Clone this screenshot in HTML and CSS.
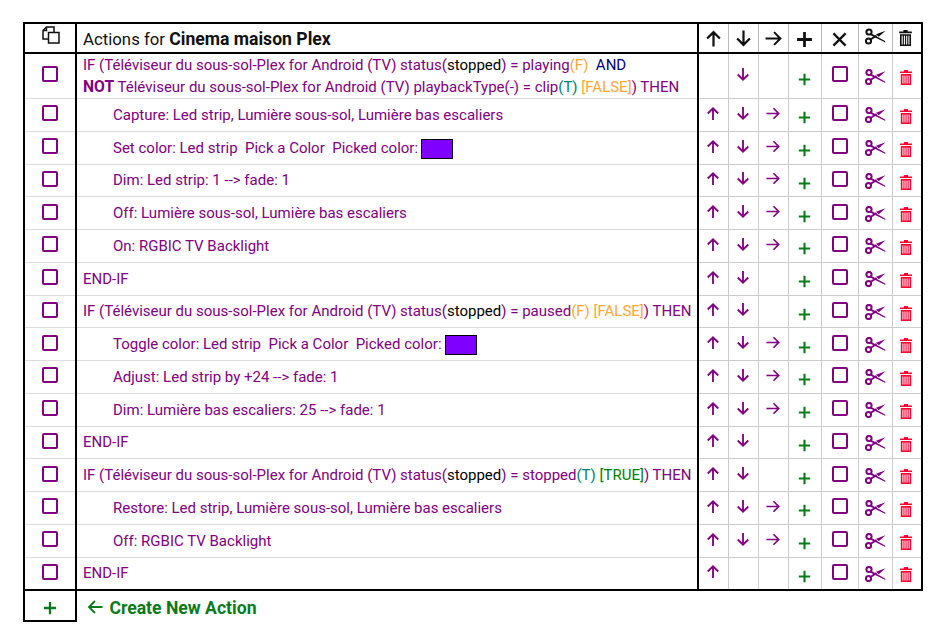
FILE: index.html
```html
<!DOCTYPE html>
<html lang="fr">
<head>
<meta charset="utf-8">
<title>Actions for Cinema maison Plex</title>
<link rel="stylesheet" href="styles.css">
</head>
<body>
<svg class="defs" width="0" height="0" aria-hidden="true">
<symbol id="up" viewBox="0 0 16 16"><path d="M8 15.500V2M2 8l6-6 6 6" fill="none" stroke="currentColor" stroke-width="2.100"/></symbol>
<symbol id="down" viewBox="0 0 16 16"><path d="M8 .5V14M2 8l6 6 6-6" fill="none" stroke="currentColor" stroke-width="2.100"/></symbol>
<symbol id="right" viewBox="0 0 16 16"><path d="M.5 8H14.500M8.500 2L14.500 8l-6 6" fill="none" stroke="currentColor" stroke-width="1.900"/></symbol>
<symbol id="plus" viewBox="0 0 16 16"><path d="M8 1v14M1 8h14" fill="none" stroke="currentColor" stroke-width="2.600"/></symbol>
<symbol id="x" viewBox="0 0 16 16"><path d="M1.500 1.500l13 13M14.500 1.500l-13 13" fill="none" stroke="currentColor" stroke-width="2.400"/></symbol>
<symbol id="box" viewBox="0 0 16 16"><rect x="1" y="1" width="14" height="14" rx="1" fill="none" stroke="currentColor" stroke-width="2"/></symbol>
<symbol id="cut" viewBox="0 0 21 16"><g fill="none" stroke="currentColor" stroke-width="2"><circle cx="4" cy="3.500" r="2.600"/><circle cx="3.500" cy="12.500" r="2.600"/><path d="M5.500 11L11.500 7"/></g><path d="M5.500 4.500L20 12.500l.5 1.500L5 6.500z" fill="currentColor"/><path d="M11 5.800L20.500 2.300 13.800 8.200z" fill="currentColor"/></symbol>
<symbol id="trash" viewBox="0 0 12 15"><path d="M4 0h4v1.500h4V3H0V1.500h4zM.8 4h10.400v11H.8zM2.400 5.500v8h1v-8zM4.500 5.500v8h1v-8zM6.600 5.500v8h1v-8zM8.700 5.500v8h1v-8z" fill="currentColor" fill-rule="evenodd"/></symbol>
<symbol id="copy" viewBox="0 0 18 18"><g fill="none" stroke="currentColor" stroke-width="1.500"><path d="M6.500 13H1V4.500L4.500 1H12V6"/><path d="M4.500 1V4.500H1"/><path d="M6.500 6.500H17V17H6.500z"/></g></symbol>
</svg>
<table class="grid">
<colgroup><col class="c-sel"><col class="c-text"><col class="c-a"><col class="c-a"><col class="c-a"><col class="c-p"><col class="c-x"><col class="c-s"><col class="c-t"></colgroup>
<thead>
<tr>
<th class="sel"><svg class="i-copy"><use href="#copy"/></svg></th>
<th class="title"><span class="title-text">Actions for <b>Cinema maison Plex</b></span></th>
<th><svg class="i-h"><use href="#up"/></svg></th>
<th><svg class="i-h"><use href="#down"/></svg></th>
<th><svg class="i-h"><use href="#right"/></svg></th>
<th><svg class="i-hp"><use href="#plus"/></svg></th>
<th><svg class="i-hx"><use href="#x"/></svg></th>
<th><svg class="i-hs"><use href="#cut"/></svg></th>
<th><svg class="i-ht"><use href="#trash"/></svg></th>
</tr>
</thead>
<tbody>
<tr class="tall">
<td class="sel"><svg class="i-box"><use href="#box"/></svg></td>
<td class="text">IF (Téléviseur du sous-sol-Plex for Android (TV) status(<span class="k">stopped</span>) = playing<span class="o">(F)</span> &nbsp;<span class="n">AND</span><br><b>NOT</b> Téléviseur du sous-sol-Plex for Android (TV) playbackType(-) = clip<span class="t">(T)</span> <span class="o">[FALSE]</span>) THEN</td>
<td></td>
<td><svg class="i-a"><use href="#down"/></svg></td>
<td></td>
<td><svg class="i-p"><use href="#plus"/></svg></td>
<td><svg class="i-x"><use href="#box"/></svg></td>
<td><svg class="i-s"><use href="#cut"/></svg></td>
<td><svg class="i-d"><use href="#trash"/></svg></td>
</tr>
<tr>
<td class="sel"><svg class="i-box"><use href="#box"/></svg></td>
<td class="text in">Capture: Led strip, Lumière sous-sol, Lumière bas escaliers</td>
<td><svg class="i-a"><use href="#up"/></svg></td><td><svg class="i-a"><use href="#down"/></svg></td><td><svg class="i-a"><use href="#right"/></svg></td>
<td><svg class="i-p"><use href="#plus"/></svg></td><td><svg class="i-x"><use href="#box"/></svg></td><td><svg class="i-s"><use href="#cut"/></svg></td><td><svg class="i-d"><use href="#trash"/></svg></td>
</tr>
<tr>
<td class="sel"><svg class="i-box"><use href="#box"/></svg></td>
<td class="text in">Set color: Led strip &nbsp;Pick a Color &nbsp;Picked color: <span class="swatch"></span></td>
<td><svg class="i-a"><use href="#up"/></svg></td><td><svg class="i-a"><use href="#down"/></svg></td><td><svg class="i-a"><use href="#right"/></svg></td>
<td><svg class="i-p"><use href="#plus"/></svg></td><td><svg class="i-x"><use href="#box"/></svg></td><td><svg class="i-s"><use href="#cut"/></svg></td><td><svg class="i-d"><use href="#trash"/></svg></td>
</tr>
<tr>
<td class="sel"><svg class="i-box"><use href="#box"/></svg></td>
<td class="text in">Dim: Led strip: 1 --&gt; fade: 1</td>
<td><svg class="i-a"><use href="#up"/></svg></td><td><svg class="i-a"><use href="#down"/></svg></td><td><svg class="i-a"><use href="#right"/></svg></td>
<td><svg class="i-p"><use href="#plus"/></svg></td><td><svg class="i-x"><use href="#box"/></svg></td><td><svg class="i-s"><use href="#cut"/></svg></td><td><svg class="i-d"><use href="#trash"/></svg></td>
</tr>
<tr>
<td class="sel"><svg class="i-box"><use href="#box"/></svg></td>
<td class="text in">Off: Lumière sous-sol, Lumière bas escaliers</td>
<td><svg class="i-a"><use href="#up"/></svg></td><td><svg class="i-a"><use href="#down"/></svg></td><td><svg class="i-a"><use href="#right"/></svg></td>
<td><svg class="i-p"><use href="#plus"/></svg></td><td><svg class="i-x"><use href="#box"/></svg></td><td><svg class="i-s"><use href="#cut"/></svg></td><td><svg class="i-d"><use href="#trash"/></svg></td>
</tr>
<tr>
<td class="sel"><svg class="i-box"><use href="#box"/></svg></td>
<td class="text in">On: RGBIC TV Backlight</td>
<td><svg class="i-a"><use href="#up"/></svg></td><td><svg class="i-a"><use href="#down"/></svg></td><td><svg class="i-a"><use href="#right"/></svg></td>
<td><svg class="i-p"><use href="#plus"/></svg></td><td><svg class="i-x"><use href="#box"/></svg></td><td><svg class="i-s"><use href="#cut"/></svg></td><td><svg class="i-d"><use href="#trash"/></svg></td>
</tr>
<tr>
<td class="sel"><svg class="i-box"><use href="#box"/></svg></td>
<td class="text">END-IF</td>
<td><svg class="i-a"><use href="#up"/></svg></td><td><svg class="i-a"><use href="#down"/></svg></td><td></td>
<td><svg class="i-p"><use href="#plus"/></svg></td><td><svg class="i-x"><use href="#box"/></svg></td><td><svg class="i-s"><use href="#cut"/></svg></td><td><svg class="i-d"><use href="#trash"/></svg></td>
</tr>
<tr>
<td class="sel"><svg class="i-box"><use href="#box"/></svg></td>
<td class="text">IF (Téléviseur du sous-sol-Plex for Android (TV) status(<span class="k">stopped</span>) = paused<span class="o">(F) [FALSE]</span>) THEN</td>
<td><svg class="i-a"><use href="#up"/></svg></td><td><svg class="i-a"><use href="#down"/></svg></td><td></td>
<td><svg class="i-p"><use href="#plus"/></svg></td><td><svg class="i-x"><use href="#box"/></svg></td><td><svg class="i-s"><use href="#cut"/></svg></td><td><svg class="i-d"><use href="#trash"/></svg></td>
</tr>
<tr>
<td class="sel"><svg class="i-box"><use href="#box"/></svg></td>
<td class="text in">Toggle color: Led strip &nbsp;Pick a Color &nbsp;Picked color: <span class="swatch"></span></td>
<td><svg class="i-a"><use href="#up"/></svg></td><td><svg class="i-a"><use href="#down"/></svg></td><td><svg class="i-a"><use href="#right"/></svg></td>
<td><svg class="i-p"><use href="#plus"/></svg></td><td><svg class="i-x"><use href="#box"/></svg></td><td><svg class="i-s"><use href="#cut"/></svg></td><td><svg class="i-d"><use href="#trash"/></svg></td>
</tr>
<tr>
<td class="sel"><svg class="i-box"><use href="#box"/></svg></td>
<td class="text in">Adjust: Led strip by +24 --&gt; fade: 1</td>
<td><svg class="i-a"><use href="#up"/></svg></td><td><svg class="i-a"><use href="#down"/></svg></td><td><svg class="i-a"><use href="#right"/></svg></td>
<td><svg class="i-p"><use href="#plus"/></svg></td><td><svg class="i-x"><use href="#box"/></svg></td><td><svg class="i-s"><use href="#cut"/></svg></td><td><svg class="i-d"><use href="#trash"/></svg></td>
</tr>
<tr>
<td class="sel"><svg class="i-box"><use href="#box"/></svg></td>
<td class="text in">Dim: Lumière bas escaliers: 25 --&gt; fade: 1</td>
<td><svg class="i-a"><use href="#up"/></svg></td><td><svg class="i-a"><use href="#down"/></svg></td><td><svg class="i-a"><use href="#right"/></svg></td>
<td><svg class="i-p"><use href="#plus"/></svg></td><td><svg class="i-x"><use href="#box"/></svg></td><td><svg class="i-s"><use href="#cut"/></svg></td><td><svg class="i-d"><use href="#trash"/></svg></td>
</tr>
<tr>
<td class="sel"><svg class="i-box"><use href="#box"/></svg></td>
<td class="text">END-IF</td>
<td><svg class="i-a"><use href="#up"/></svg></td><td><svg class="i-a"><use href="#down"/></svg></td><td></td>
<td><svg class="i-p"><use href="#plus"/></svg></td><td><svg class="i-x"><use href="#box"/></svg></td><td><svg class="i-s"><use href="#cut"/></svg></td><td><svg class="i-d"><use href="#trash"/></svg></td>
</tr>
<tr>
<td class="sel"><svg class="i-box"><use href="#box"/></svg></td>
<td class="text">IF (Téléviseur du sous-sol-Plex for Android (TV) status(<span class="k">stopped</span>) = stopped<span class="t">(T)</span> <span class="g">[TRUE]</span>) THEN</td>
<td><svg class="i-a"><use href="#up"/></svg></td><td><svg class="i-a"><use href="#down"/></svg></td><td></td>
<td><svg class="i-p"><use href="#plus"/></svg></td><td><svg class="i-x"><use href="#box"/></svg></td><td><svg class="i-s"><use href="#cut"/></svg></td><td><svg class="i-d"><use href="#trash"/></svg></td>
</tr>
<tr>
<td class="sel"><svg class="i-box"><use href="#box"/></svg></td>
<td class="text in">Restore: Led strip, Lumière sous-sol, Lumière bas escaliers</td>
<td><svg class="i-a"><use href="#up"/></svg></td><td><svg class="i-a"><use href="#down"/></svg></td><td><svg class="i-a"><use href="#right"/></svg></td>
<td><svg class="i-p"><use href="#plus"/></svg></td><td><svg class="i-x"><use href="#box"/></svg></td><td><svg class="i-s"><use href="#cut"/></svg></td><td><svg class="i-d"><use href="#trash"/></svg></td>
</tr>
<tr>
<td class="sel"><svg class="i-box"><use href="#box"/></svg></td>
<td class="text in">Off: RGBIC TV Backlight</td>
<td><svg class="i-a"><use href="#up"/></svg></td><td><svg class="i-a"><use href="#down"/></svg></td><td><svg class="i-a"><use href="#right"/></svg></td>
<td><svg class="i-p"><use href="#plus"/></svg></td><td><svg class="i-x"><use href="#box"/></svg></td><td><svg class="i-s"><use href="#cut"/></svg></td><td><svg class="i-d"><use href="#trash"/></svg></td>
</tr>
<tr class="last">
<td class="sel"><svg class="i-box"><use href="#box"/></svg></td>
<td class="text">END-IF</td>
<td><svg class="i-a"><use href="#up"/></svg></td><td></td><td></td>
<td><svg class="i-p"><use href="#plus"/></svg></td><td><svg class="i-x"><use href="#box"/></svg></td><td><svg class="i-s"><use href="#cut"/></svg></td><td><svg class="i-d"><use href="#trash"/></svg></td>
</tr>
</tbody>
<tfoot>
<tr>
<td class="sel add"><svg class="i-add"><use href="#plus"/></svg></td>
<td class="create" colspan="8"><svg class="i-back" viewBox="0 0 16 16"><path d="M15.500 8H2M8 2L2 8l6 6" fill="none" stroke="currentColor" stroke-width="1.900"/></svg> <span class="create-text">Create New Action</span></td>
</tr>
</tfoot>
</table>
</body>
</html>
```
FILE: styles.css
```css
html, body { margin: 0; background: #fff; }
body { padding: 22px 0 0 23px; font-family: Roboto, "Liberation Sans", sans-serif; font-size: 15px; color: #800080; }
.defs { position: absolute; }
svg { display: inline-block; vertical-align: middle; }

.grid { border-collapse: collapse; table-layout: fixed; width: 898px; }
.c-sel { width: 52px; }
.c-text { width: 622px; }
.c-a { width: 30px; }
.c-p { width: 33px; }
.c-x { width: 37px; }
.c-s { width: 34px; }
.c-t { width: 30px; }

th { height: 28px; padding: 0; border-top: 2px solid #000; border-bottom: 2px solid #000; border-right: 1px solid #bbb; color: #111; font-weight: 400; text-align: center; }
th.sel { border: 2px solid #000; }
th.title { border: 2px solid #000; padding-left: 6px; text-align: left; font-size: 16.800px; }
.title-text { display: inline-block; padding-top: 2px; }
th:last-child { border-right: 2px solid #000; }
th b { font-weight: 700; font-size: 17.600px; }

td { height: 32.75px; padding: 0; border-top: 1px solid #ddd; border-right: 1px solid #ccc; text-align: center; box-sizing: border-box; }
tbody tr:first-child td { border-top: 2px solid #000; }
td.sel { border-left: 2px solid #000; border-right: 2px solid #000; }
td.text { border-right: 2px solid #000; padding: 0 6px; text-align: left; line-height: 22px; white-space: nowrap; }
td.in { padding-left: 36px; }
td:last-child { border-right: 2px solid #000; }
tbody td:nth-child(n+3) { border-top-color: #ccc; }
tr.tall td { height: 45.250px; }
tr.tall .i-box, tr.tall .i-x { margin-top: -7px; }
tr.last td { border-bottom: 2px solid #000; }

tfoot td { height: 31px; padding-top: 3px; }
td.add { border: 2px solid #000; color: #0a7a1a; }
td.create { border: 0; border-top: 2px solid #000; padding-left: 10px; text-align: left; color: #0a7a1a; font-size: 17.600px; font-weight: 700; }
.create-text { display: inline-block; padding-top: 1px; }

.k { color: #000; }
.o { color: #ffa733; }
.t { color: #008070; }
.g { color: #008000; }
.n { color: #000080; }
.text b { font-weight: 700; font-size: 15.700px; }

.swatch { display: inline-block; width: 32px; height: 20px; box-sizing: border-box; border: 1px solid #000; background: #8000ff; vertical-align: middle; margin-left: -.5px; }

.i-copy { width: 18px; height: 18px; margin: -8px 0 0 2px; }
.i-h { width: 17px; height: 17px; margin-top: -2px; }
.i-hp { width: 17px; height: 17px; margin-top: 1px; }
.i-hx { width: 15px; height: 15px; margin-top: 1px; }
.i-hs { width: 21px; height: 17px; margin-top: -5px; }
.i-ht { width: 13px; height: 16px; margin-top: -3px; margin-right: 2px; }
.i-box { width: 16px; height: 16px; margin-top: -5px; color: #800080; }
.i-a { width: 14px; height: 15px; margin-top: -5px; color: #800080; }
.i-p { width: 13px; height: 13px; margin-top: 5px; color: #0a7a1a; }
.i-x { width: 16px; height: 16px; margin-top: -5px; }
.i-s { width: 21px; height: 16px; margin-top: -1px; }
.i-d { width: 12px; height: 15px; margin: 2px 2px 0 0; color: #ff0033; }
.i-add { width: 14px; height: 14px; margin-top: 1px; }
.i-back { width: 16px; height: 16px; margin-top: -4px; margin-right: 2px; }
```
